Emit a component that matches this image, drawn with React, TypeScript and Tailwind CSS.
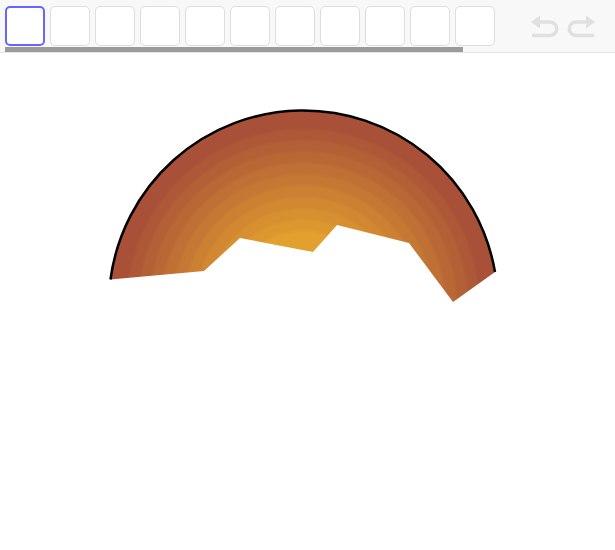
const slots = Array.from({ length: 11 }, (_, i) => i);

// concentric colour bands, inner orange to outer brown, edges kept soft
const BAND_COUNT = 11;
const INNER = [226, 160, 46];
const OUTER = [168, 80, 56];
const START = 0.33;
const END = 0.97;

const bandStops = Array.from({ length: BAND_COUNT }, (_, i) => {
    const t = i / (BAND_COUNT - 1);
    const color = INNER.map((c, k) => Math.round(c + (OUTER[k] - c) * t));
    const width = (END - START) / BAND_COUNT;
    const from = START + width * i;
    return { color: `rgb(${color.join(",")})`, from, to: from + width * 0.7 };
});

const UndoIcon = ({ flip }: { flip?: boolean }) => (
    <svg
        width="28"
        height="24"
        viewBox="0 0 28 24"
        className={flip ? "-scale-x-100" : ""}
    >
        <polygon points="0,7 9,0.5 9,13.5" fill="#e0e0e0" />
        <path
            d="M8 7H19a6.75 6.75 0 0 1 0 13.5H1"
            fill="none"
            stroke="#e0e0e0"
            strokeWidth="3.5"
        />
    </svg>
);

const Toolbar = () => (
    <div className="flex h-[53px] w-full border-b border-[#e4e4e4] bg-[#f8f8f8] pl-[5px]">
        <div className="flex w-[490px] flex-col">
            <div className="mt-[6px] flex gap-[5px]">
                {slots.map((i) => (
                    <div
                        key={i}
                        className={
                            i === 0
                                ? "h-[40px] w-[40px] rounded-[5px] border-2 border-[#6666ff] bg-white"
                                : "h-[40px] w-[40px] rounded-[5px] border border-[#dedede] bg-white"
                        }
                    />
                ))}
            </div>
            <div className="mt-[1px] h-[5px] w-[458px] bg-[#9b9b9b]" />
        </div>
        <div className="ml-[36px] mt-[15px] flex gap-[8px]">
            <UndoIcon />
            <UndoIcon flip />
        </div>
    </div>
);

export default function App() {
    return (
        <div className="min-h-screen w-full bg-white">
            <Toolbar />
            <svg width="615" height="497" viewBox="0 53 615 497" className="block">
                <defs>
                    <radialGradient
                        id="bands"
                        gradientUnits="userSpaceOnUse"
                        cx="303"
                        cy="305"
                        r="195"
                    >
                        <stop offset="0" stopColor={bandStops[0].color} />
                        {bandStops.map((b) => [
                            <stop key={b.from} offset={b.from} stopColor={b.color} />,
                            <stop key={b.to} offset={b.to} stopColor={b.color} />,
                        ])}
                    </radialGradient>
                </defs>
                <path
                    d="M110.5 279.5A194.5 194.5 0 0 1 495 272L453 302L409 243L337 225L313 252L240 238L204 271Z"
                    fill="url(#bands)"
                />
                <path
                    d="M110.5 279.5A194.5 194.5 0 0 1 495 272"
                    fill="none"
                    stroke="#000000"
                    strokeWidth="2.5"
                />
            </svg>
        </div>
    );
}
